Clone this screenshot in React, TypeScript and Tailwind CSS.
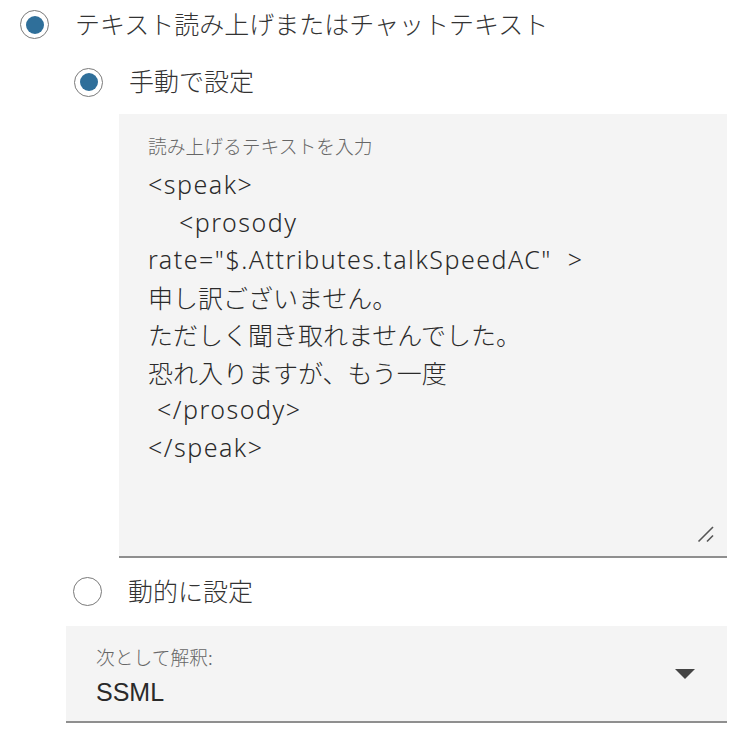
import React from "react";

const CJK = '"Noto Sans CJK JP", sans-serif';
const BODY = '"Noto Sans", "Noto Sans CJK JP", sans-serif';
const SELECT = '"Liberation Sans", "Noto Sans CJK JP", sans-serif';

function Radio({ checked }: { checked?: boolean }) {
	return (
		<span className="w-[29px] h-[29px] shrink-0 rounded-full border-[1.5px] border-[#7a7a7a] bg-white flex items-center justify-center">
			{checked && <span className="w-[18px] h-[18px] rounded-full bg-[#2f6f9a]" />}
		</span>
	);
}

const lines: { text: string; indent?: string; jp?: boolean }[] = [
	{ text: "<speak>" },
	{ text: "<prosody", indent: "pl-[31px]" },
	{ text: 'rate="$.Attributes.talkSpeedAC"  >' },
	{ text: "申し訳ございません。", jp: true },
	{ text: "ただしく聞き取れませんでした。", jp: true },
	{ text: "恐れ入りますが、もう一度", jp: true },
	{ text: "</prosody>", indent: "pl-[9px]" },
	{ text: "</speak>" },
];

export default function App() {
	return (
		<div className="w-[744px] h-[738px] bg-white text-[#333]" style={{ fontFamily: CJK }}>
			{/* Top option */}
			<div className="h-[49px] pl-[20px] flex items-center gap-[26px]">
				<Radio checked />
				<span className="text-[25px] leading-[30px] pb-[4px] font-light">テキスト読み上げまたはチャットテキスト</span>
			</div>

			<div className="pl-[66px] pr-[17px]">
				{/* Manual */}
				<div className="mt-[13px] h-[40px] pl-[8px] flex items-center gap-[26px]">
					<Radio checked />
					<span className="text-[25px] leading-[30px] pb-[4px] font-light">手動で設定</span>
				</div>

				{/* Text area */}
				<div className="relative mt-[12px] ml-[53px] h-[444px] bg-[#f4f4f4] border-b-2 border-[#8f8f8f] pt-[18px] pl-[29px] pr-[24px]">
					<div className="text-[18.75px] leading-[28px] text-[#666] font-light">読み上げるテキストを入力</div>
					<div className="mt-[6px] text-[25px] leading-[37.5px] text-[#2a2a2a]" style={{ fontFamily: BODY }}>
						{lines.map((l, i) => (
							<div
								key={i}
								className={`whitespace-pre ${l.indent ?? ""} ${l.jp ? "font-light" : "font-light tracking-[1.5px]"}`}
								style={l.jp ? { fontFamily: CJK } : undefined}
							>
								{l.text}
							</div>
						))}
					</div>
					<svg className="absolute right-[12px] bottom-[12px]" width="18" height="18" viewBox="0 0 18 18">
						<line x1="1.5" y1="15.5" x2="16" y2="1" stroke="#555" strokeWidth="1.6" />
						<line x1="10" y1="15.5" x2="16" y2="9.5" stroke="#555" strokeWidth="1.6" />
					</svg>
				</div>

				{/* Dynamic */}
				<div className="mt-[13px] h-[40px] pl-[7px] flex items-center gap-[26px]">
					<Radio />
					<span className="text-[25px] leading-[30px] pb-[2px] font-light">動的に設定</span>
				</div>

				{/* Select */}
				<div className="mt-[15px] h-[97px] bg-[#f4f4f4] border-b-2 border-[#8f8f8f] pl-[30px] pr-[32px] flex items-center justify-between">
					<div className="self-start pt-[17px]">
						<div className="text-[18.75px] leading-[28px] text-[#666] font-light">次として解釈:</div>
						<div className="mt-[5px] text-[25px] leading-[32px] text-[#2a2a2a]" style={{ fontFamily: SELECT }}>
							SSML
						</div>
					</div>
					<svg width="20" height="10" viewBox="0 0 20 10">
						<polygon points="0,0 20,0 10,10" fill="#444" />
					</svg>
				</div>
			</div>
		</div>
	);
}
